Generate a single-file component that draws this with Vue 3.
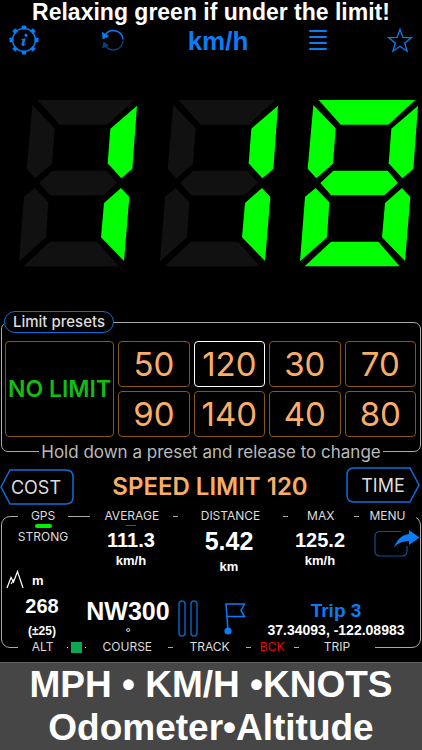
<template>
  <div class="speed-screen">
    <!-- headline -->
    <h1 class="headline">Relaxing green if under the limit!</h1>

    <!-- toolbar -->
    <nav class="toolbar">
      <button class="tool-btn" aria-label="Settings">
        <svg width="30" height="30" viewBox="0 0 30 30">
          <g fill="#0a7cf5">
            <rect v-for="n in 8" :key="n" x="12.8" y="0.4" width="4.4" height="4" rx="0.8" :transform="`rotate(${n * 45} 15 15)`" />
          </g>
          <circle cx="15" cy="15" r="11.4" fill="none" stroke="#0a7cf5" stroke-width="1.5" />
          <path d="M15.600 9.300a1.600 1.600 0 1 1 0 1.800zM12 14.200C13.700 14 15.200 13.600 16.800 13L15 19.200C14.900 19.800 15.500 19.600 16.600 18.300L17.100 18.700C14.700 22 11.900 21.300 12.500 18.800L13.500 15.400C13.600 14.900 13.200 14.800 12 14.900Z" fill="#0a7cf5" />
        </svg>
      </button>
      <button class="tool-btn" aria-label="Reset">
        <svg width="28" height="28" viewBox="5 0 28 28" fill="none">
          <path d="M11.500 8.500A9.800 9.800 0 0 1 29 13.500" stroke="#0a7cf5" stroke-width="1.5" />
          <path d="M8 5.800L8.600 13.600 15.200 10.200Z" fill="#0a7cf5" />
          <path d="M11.500 20A9.800 9.800 0 0 0 29 15" stroke="#0b3f77" stroke-width="1.5" />
          <path d="M8 22.500L9.600 15.400 14.800 19.600Z" fill="#0b3f77" />
        </svg>
      </button>
      <button class="tool-btn unit-btn">km/h</button>
      <button class="tool-btn" aria-label="List">
        <svg width="18" height="26" viewBox="0 0 18 26">
          <path d="M1 4h16M1 10h16M1 16h16M1 22h16" stroke="#0a7cf5" stroke-width="2" stroke-linecap="round" />
        </svg>
      </button>
      <button class="tool-btn" aria-label="Favourite">
        <svg width="26" height="26" viewBox="0 0 26 26">
          <path d="M13 2.2l2.9 8.2 8.7.2-6.9 5.3 2.4 8.3-7.1-4.9-7.1 4.9 2.4-8.3-6.9-5.3 8.7-.2z" fill="none" stroke="#0a7cf5" stroke-width="1.3" />
        </svg>
      </button>
    </nav>

    <!-- seven segment readout -->
    <div class="readout" role="img" :aria-label="speed">
      <svg v-for="(digit, i) in speed" :key="i" class="digit" viewBox="0 0 422 585">
        <polygon
          v-for="(points, name) in segments"
          :key="name"
          :points="points"
          :class="lit[digit].includes(name) ? 'segment-on' : 'segment-off'"
        />
      </svg>
    </div>

    <!-- presets -->
    <fieldset class="presets">
      <legend class="presets-legend">Limit presets</legend>
      <div class="preset-grid">
        <button class="preset no-limit" @click="limit = 0">NO LIMIT</button>
        <button
          v-for="value in presets"
          :key="value"
          class="preset"
          :class="{ selected: limit === value }"
          @click="limit = value"
        >{{ value }}</button>
      </div>
      <p class="presets-hint"><span>Hold down a preset and release to change</span></p>
    </fieldset>

    <!-- limit row -->
    <div class="limit-row">
      <button class="side-btn cost">
        <svg class="side-shape" viewBox="0 0 74 36" preserveAspectRatio="none">
          <path d="M1 18L10 1H66Q73 1 73 8V28Q73 35 66 35H10Z" />
        </svg>
        <span>COST</span>
      </button>
      <div class="limit-text">{{ limit ? `SPEED LIMIT ${limit}` : 'NO LIMIT' }}</div>
      <button class="side-btn time">
        <svg class="side-shape" viewBox="0 0 74 36" preserveAspectRatio="none">
          <path d="M73 18L64 1H8Q1 1 1 8V28Q1 35 8 35H64Z" />
        </svg>
        <span>TIME</span>
      </button>
    </div>

    <!-- trip data -->
    <section class="status">
      <div class="labels labels-top">
        <span>GPS</span><i class="rule"></i>
        <span>AVERAGE</span><i class="rule"></i>
        <span>DISTANCE</span><i class="rule"></i>
        <span>MAX</span><i class="rule"></i>
        <span>MENU</span>
      </div>

      <div class="values values-top">
        <div class="cell">
          <i class="gps-bar"></i>
          <span class="gps-text">STRONG</span>
        </div>
        <div class="cell">
          <i class="average-bar"></i>
          <strong class="value">111.3</strong>
          <span class="unit">km/h</span>
        </div>
        <div class="cell">
          <strong class="value distance">5.42</strong>
          <span class="unit">km</span>
        </div>
        <div class="cell">
          <strong class="value">125.2</strong>
          <span class="unit">km/h</span>
        </div>
        <button class="menu-btn" aria-label="Menu">
          <svg width="46" height="30" viewBox="0 0 46 30">
            <path d="M27 3.5H6Q1 3.5 1 8.5V23Q1 28 6 28H28Q33 28 33 23V18" fill="none" stroke="#0b4f9e" stroke-width="1.2" />
            <path d="M20 19.500C23 11 28 7 35 6V2L45.500 9.500 35 17V13C29 13 24 15 20 19.500Z" fill="#0a7cf5" />
          </svg>
        </button>
      </div>

      <div class="values values-bottom">
        <div class="altitude">
          <div class="altitude-head">
            <svg width="18" height="20" viewBox="0 0 18 20">
              <path d="M1 18L5 7.500L7.500 12L11.500 1.500L17 18M5 14L8 9.500" fill="none" stroke="#fff" stroke-width="1.2" />
            </svg>
            <span>m</span>
          </div>
          <strong class="value">268</strong>
          <span class="accuracy">(±25)</span>
        </div>
        <div class="course">
          <strong>NW300</strong>
          <span>°</span>
        </div>
        <div class="track">
          <button class="tool-btn" aria-label="Pause">
            <svg width="20" height="38" viewBox="0 0 20 38" fill="none" stroke="#0b5fbd" stroke-width="1.5">
              <rect x="1" y="1" width="6" height="35" rx="3" />
              <rect x="13" y="1" width="6" height="35" rx="3" />
            </svg>
          </button>
          <button class="tool-btn" aria-label="Flag">
            <svg width="22" height="34" viewBox="0 0 22 34">
              <path d="M4 29L2 2H20.500L17 8.500 20.500 14.500H3" fill="none" stroke="#0a7cf5" stroke-width="1.500" />
              <circle cx="4" cy="29" r="3.600" fill="#0a7cf5" />
            </svg>
          </button>
        </div>
        <div class="trip">
          <a class="trip-name" href="#">Trip 3</a>
          <span>37.34093, -122.08983</span>
        </div>
      </div>

      <div class="labels labels-bottom">
        <span>ALT</span>
        <span class="marker-cell"><i class="dot"></i><i class="marker"></i><i class="dot"></i></span>
        <span>COURSE</span><i class="rule"></i>
        <span>TRACK</span><i class="rule"></i>
        <span class="back">BCK</span><i class="rule"></i>
        <span>TRIP</span>
      </div>
    </section>

    <!-- banner -->
    <footer class="banner">
      <div>MPH • KM/H •KNOTS</div>
      <div>Odometer•Altitude</div>
    </footer>
  </div>
</template>

<script setup>
import { ref } from 'vue'

const speed = ref('118')
const limit = ref(120)
const presets = [50, 120, 30, 70, 90, 140, 40, 80]

const segments = {
  a: '113,45 403,45 322,119 179,119',
  b: '411,62 397,252 364,280 323,235 331,131',
  c: '363,309 388,336 372,528 303,457 312,354',
  d: '71,544 150,470 292,470 356,544',
  e: '104,309 145,352 138,457 57,529 72,335',
  f: '97,60 164,130 156,236 106,280 80,251',
  g: '118,294 157,257 320,257 351,294 310,331 150,331'
}

const lit = {
  0: 'abcdef',
  1: 'bc',
  2: 'abdeg',
  3: 'abcdg',
  4: 'bcfg',
  5: 'acdfg',
  6: 'acdefg',
  7: 'abc',
  8: 'abcdefg',
  9: 'abcdfg'
}
</script>

<style>
body {
  background: #000;
}
</style>

<style scoped>
.speed-screen {
  min-height: 100vh;
  display: flex;
  flex-direction: column;
  background: #000;
  color: #fff;
  font-family: Inter, 'Liberation Sans', sans-serif;
}

button {
  font-family: inherit;
  background: none;
  border: none;
  padding: 0;
  margin: 0;
  cursor: pointer;
}

svg {
  display: block;
}

.headline {
  margin: 0;
  line-height: 24px;
  font-family: 'Liberation Sans', Arial, sans-serif;
  font-size: 23px;
  font-weight: 700;
  text-align: center;
  white-space: nowrap;
}

/* toolbar */
.toolbar {
  display: flex;
  justify-content: space-between;
  align-items: center;
  height: 32px;
  padding: 0 9px;
}

.unit-btn {
  padding-top: 2px;
  font-family: 'Liberation Sans', Arial, sans-serif;
  font-size: 26px;
  font-weight: 700;
  color: #0a7cf5;
}

/* readout */
.readout {
  display: flex;
  margin-top: 29px;
}

.digit {
  flex: 1;
  min-width: 0;
}

.segment-on {
  fill: #00ff00;
}

.segment-off {
  fill: #111;
}

/* presets */
.presets {
  position: relative;
  margin: 31px 1px 0;
  padding: 8px 4px 14px 3px;
  border: 1px solid #aaa;
  border-radius: 7px;
  min-width: 0;
}

.presets-legend {
  box-sizing: border-box;
  height: 22px;
  margin-left: -1px;
  padding: 0 8px;
  border: 1px solid #0b6fdd;
  border-radius: 11px;
  font-size: 15px;
  font-weight: 500;
  line-height: 20px;
  color: #ddd;
}

.preset-grid {
  display: grid;
  grid-template-columns: 110fr 72fr 72fr 72fr 72fr;
  grid-auto-rows: 46px;
  gap: 4px;
}

.preset {
  min-width: 0;
  border: 1px solid #8a5413;
  border-radius: 4px;
  font-size: 33px;
  line-height: 1;
  color: #f9ae67;
}

.preset.selected {
  border-color: #fff;
}

.no-limit {
  grid-row: span 2;
  font-size: 23px;
  font-weight: 600;
  white-space: nowrap;
  color: #12bd12;
}

.presets-hint {
  position: absolute;
  left: 0;
  right: 0;
  bottom: -11px;
  margin: 0;
  font-size: 17px;
  line-height: 20px;
  text-align: center;
  white-space: nowrap;
  color: #bbb;
}

.presets-hint span {
  padding: 0 2px;
  background: #000;
}

/* limit row */
.limit-row {
  display: flex;
  justify-content: space-between;
  align-items: center;
  margin-top: 15px;
  padding: 0 2px 0 0;
}

.side-btn {
  position: relative;
  width: 74px;
  height: 36px;
  font-size: 18px;
  color: #ddd;
}

.side-btn span {
  position: relative;
}

.cost {
  margin-top: 2px;
  padding-right: 2px;
}

.time {
  margin-bottom: 2px;
}

.side-shape {
  position: absolute;
  inset: 0;
  width: 100%;
  height: 100%;
  fill: none;
  stroke: #0a6fdd;
  stroke-width: 1.5;
}

.limit-text {
  padding-top: 2px;
  font-size: 24px;
  font-weight: 600;
  line-height: 28px;
  color: #f9ae67;
}

/* trip data */
.status {
  margin: 11px 1px 0;
  border: 1px solid #aaa;
  border-radius: 9px;
}

.labels {
  display: grid;
  align-items: center;
  height: 16px;
  background: #000;
  font-size: 12px;
  line-height: 16px;
  text-align: center;
  color: #ddd;
}

.labels-top {
  grid-template-columns: 50fr 22fr 83fr 5fr 104fr 5fr 66fr 5fr 57fr;
  margin: -9px 4px 0 16px;
}

.labels-bottom {
  grid-template-columns: 49fr 19fr 82fr 5fr 72fr 5fr 43fr 5fr 76fr;
  margin: 0 45px -8px 16px;
}

.rule {
  height: 1px;
  background: #aaa;
}

.marker-cell {
  display: flex;
  justify-content: space-between;
  align-items: center;
}

.marker {
  width: 11px;
  height: 11px;
  background: #0ca750;
}

.dot {
  width: 1px;
  height: 1px;
  background: #ddd;
}

.back {
  color: #f00808;
}

.values {
  display: grid;
  font-family: 'Liberation Sans', Arial, sans-serif;
  font-weight: 700;
}

.values-top {
  grid-template-columns: 82fr 94fr 102fr 80fr 60fr;
  height: 51px;
}

.cell {
  display: flex;
  flex-direction: column;
  align-items: center;
  position: relative;
}

.cell .value {
  margin-top: 4px;
}

.gps-bar {
  width: 17px;
  height: 4px;
  border-radius: 2px;
  background: #00f000;
}

.gps-text {
  margin-top: 1px;
  font-family: Inter, sans-serif;
  font-size: 12px;
  font-weight: 400;
  line-height: 16px;
  color: #ddd;
}

.average-bar {
  position: absolute;
  top: 1px;
  width: 10px;
  height: 1px;
  background: #0b5fbd;
}

.value {
  font-size: 20px;
  line-height: 24px;
}

.distance {
  font-size: 25px;
  line-height: 26px;
}

.unit {
  font-size: 13px;
  line-height: 18px;
}

.distance + .unit {
  margin-top: 4px;
}

.menu-btn {
  align-self: start;
  justify-self: end;
  margin-top: 4px;
}

.values-bottom {
  grid-template-columns: 80fr 92fr 76fr 170fr;
  height: 64px;
}

.altitude {
  display: flex;
  flex-direction: column;
  align-items: center;
  margin-top: -5px;
}

.altitude-head {
  display: flex;
  align-items: center;
  align-self: flex-start;
  gap: 8px;
  margin-left: 4px;
  font-size: 13px;
}

.altitude .value {
  margin-top: 4px;
}

.accuracy {
  margin-top: 7px;
  font-size: 12px;
  line-height: 12px;
}

.course {
  display: flex;
  flex-direction: column;
  align-items: center;
  margin-top: 21px;
  font-size: 25px;
  line-height: 30px;
}

.course span {
  font-size: 13px;
  font-weight: 400;
  line-height: 14px;
}

.track {
  display: flex;
  justify-content: center;
  align-items: center;
  gap: 26px;
  margin-top: 22px;
}

.trip {
  display: flex;
  flex-direction: column;
  align-items: center;
  margin-top: 26px;
  padding-left: 2px;
  font-size: 14px;
  line-height: 18px;
  white-space: nowrap;
}

.trip-name {
  font-size: 19px;
  line-height: 20px;
  color: #0a7cf5;
  text-decoration: none;
}

/* banner */
.banner {
  flex: 1;
  margin-top: 14px;
  border-top: 1px solid #666;
  background: #464646;
  font-family: 'Liberation Sans', Arial, sans-serif;
  font-size: 37px;
  font-weight: 700;
  line-height: 43px;
  text-align: center;
  white-space: nowrap;
}
</style>
